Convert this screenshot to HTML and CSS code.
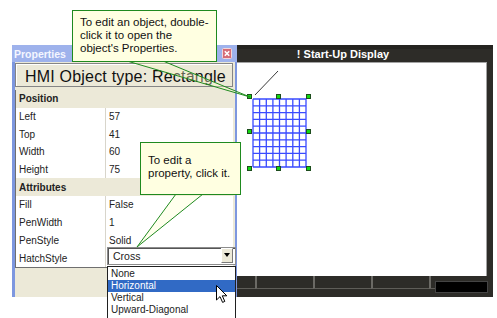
FILE: index.html
```html
<!DOCTYPE html>
<html lang="en">
<head>
    <meta charset="UTF-8">
    <meta name="viewport" content="width=device-width, initial-scale=1.0">
    <link rel="stylesheet" href="styles.css">
    <title>HMI Properties</title>
</head>
<body>
    <div class="desk">
        <!-- display window behind the properties panel -->
        <div class="display">
            <div class="display-title">! Start-Up Display</div>
            <div class="canvas">
                <svg class="canvas-art" width="288" height="214" viewBox="0 0 288 214">
                    <line x1="79" y1="9" x2="56" y2="33" stroke="#3a3a3a" stroke-width="1"/>
                    <path d="M54 37V105M60.6 37V105M67.3 37V105M73.9 37V105M80.5 37V105M87.1 37V105M93.8 37V105M100.4 37V105M107 37V105M54 37H107M54 43.8H107M54 50.6H107M54 57.4H107M54 64.2H107M54 71H107M54 77.8H107M54 84.6H107M54 91.4H107M54 98.2H107M54 105H107" stroke="#3a4bff" stroke-width="1.3" fill="none"/>
                    <g fill="#12d812" stroke="#1d4d1d" stroke-width="1">
                        <rect x="48.5" y="32.5" width="4" height="4"/>
                        <rect x="77.5" y="32.5" width="4" height="4"/>
                        <rect x="107.5" y="32.5" width="4" height="4"/>
                        <rect x="48.5" y="67.5" width="4" height="4"/>
                        <rect x="107.5" y="67.5" width="4" height="4"/>
                        <rect x="48.5" y="104.5" width="4" height="4"/>
                        <rect x="77.5" y="104.5" width="4" height="4"/>
                        <rect x="107.5" y="104.5" width="4" height="4"/>
                    </g>
                </svg>
            </div>
            <div class="status">
                <span class="cell"></span>
                <span class="cell"></span>
                <span class="cell"></span>
                <span class="cell"></span>
                <span class="cell gap"></span>
                <span class="led"></span>
            </div>
        </div>

        <!-- properties panel -->
        <div class="props">
            <div class="props-title">
                <span>Properties</span>
                <svg class="close" width="10" height="11" viewBox="0 0 10 11">
                    <rect x="0.5" y="0.5" width="9" height="10" rx="1" fill="#d66c76" stroke="#f2d6da"/>
                    <path d="M2.8 3.2L7.2 7.8M7.2 3.2L2.8 7.8" stroke="#fff" stroke-width="1.6"/>
                </svg>
            </div>
            <div class="props-body">
                <div class="obj-type">HMI Object type: Rectangle</div>
                <div class="grid">
                    <div class="row section">Position</div>
                    <div class="row"><span class="key">Left</span><span class="val">57</span></div>
                    <div class="row"><span class="key">Top</span><span class="val">41</span></div>
                    <div class="row"><span class="key">Width</span><span class="val">60</span></div>
                    <div class="row"><span class="key">Height</span><span class="val">75</span></div>
                    <div class="row section">Attributes</div>
                    <div class="row"><span class="key">Fill</span><span class="val">False</span></div>
                    <div class="row"><span class="key">PenWidth</span><span class="val">1</span></div>
                    <div class="row"><span class="key">PenStyle</span><span class="val">Solid</span></div>
                    <div class="row"><span class="key">HatchStyle</span><span class="val"></span>
                        <div class="combo">
                            <span class="combo-text">Cross</span>
                            <span class="combo-btn"><span class="arrow"></span></span>
                            <ul class="combo-list">
                                <li class="opt">None</li>
                                <li class="opt active">Horizontal</li>
                                <li class="opt">Vertical</li>
                                <li class="opt">Upward-Diagonal</li>
                            </ul>
                        </div>
                    </div>
                </div>
            </div>
        </div>

        <!-- callout pointers -->
        <svg class="pointers" width="497" height="318" viewBox="0 0 497 318">
            <polyline points="127,61 250,97 163,61" fill="#ffffcc" fill-opacity="0.35" stroke="#1f8a1f" stroke-width="1"/>
            <polyline points="176,194 137,247 203,194" fill="#ffffcc" fill-opacity="0.35" stroke="#1f8a1f" stroke-width="1"/>
        </svg>

        <div class="callout callout-object">To edit an object, double-<br>click it to open the<br>object's Properties.</div>
        <div class="callout callout-prop">To edit a<br>property, click it.</div>

        <svg class="cursor" width="13" height="19" viewBox="0 0 13 19">
            <path d="M0.5 0.5L0.5 15L4 11.6L6.6 17.4L8.8 16.4L6.3 10.8L10.8 10.8Z" fill="#fff" stroke="#000" stroke-width="1" stroke-linejoin="round"/>
        </svg>
    </div>
</body>
</html>
```

FILE: styles.css
```css
body {
    margin: 0;
    background-color: #fff;
    font-family: "Liberation Sans", Arial, sans-serif;
    overflow: hidden;
}

.desk {
    position: relative;
    width: 497px;
    height: 318px;
    overflow: hidden;
}

/* display window */
.display {
    position: absolute;
    left: 193px;
    top: 45px;
    width: 300px;
    height: 252px;
    background-color: #2d2c28;
    display: flex;
    flex-direction: column;
    z-index: 1;
}

.display-title {
    height: 17px;
    line-height: 18px;
    font-size: 11px;
    font-weight: bold;
    color: #fff;
    text-align: center;
    box-shadow: inset 0 4px #252420;
}

.canvas {
    height: 214px;
    margin: 0 6px;
    background-color: #fff;
    box-shadow: inset -1px 1px #a3a3a3;
}

.canvas-art {
    display: block;
}

.status {
    flex: 1;
    display: flex;
    align-items: flex-start;
    padding-left: 6px;
}

.cell {
    width: 56px;
    height: 12px;
    border-bottom: 1px solid #5e5d58;
}

.cell + .cell {
    border-left: 2px solid #6b6a65;
}

.cell.gap {
    width: 4px;
}

.led {
    width: 53px;
    height: 12px;
    margin-top: 5px;
    background-color: #000;
    border: 1px solid #444;
    box-sizing: border-box;
}

/* properties panel */
.props {
    position: absolute;
    left: 12px;
    top: 45px;
    width: 225px;
    height: 252px;
    display: flex;
    flex-direction: column;
    z-index: 2;
}

.props-title {
    height: 17px;
    background-color: #9eb2ec;
    display: flex;
    align-items: center;
    justify-content: space-between;
    padding: 0 5px 0 2px;
    color: #f4f6ff;
    font-size: 10.5px;
    font-weight: bold;
}

.close {
    display: block;
}

.props-body {
    flex: 1;
    background-color: #ece9d8;
    border-left: 3px solid #7d97df;
    border-right: 2px solid #7d97df;
    padding: 1px 2px 0 0;
    display: flex;
    flex-direction: column;
}

.obj-type {
    height: 24px;
    box-sizing: border-box;
    border: 1px solid #858585;
    box-shadow: inset 1px 1px #fff;
    padding: 3px 0 0 9px;
    line-height: 19px;
    font-size: 16px;
    letter-spacing: 0.2px;
    white-space: nowrap;
    overflow: hidden;
    color: #111;
}

.grid {
    margin-top: 3px;
    background-color: #fff;
    border-left: 1px solid #6f6f6f;
    border-bottom: 1px solid #6f6f6f;
    font-size: 10px;
    color: #222;
}

.row {
    height: 17.7px;
    display: flex;
    position: relative;
}

.row.section {
    background-color: #ece9d8;
    font-weight: bold;
    align-items: center;
    padding-left: 3px;
}

.key {
    width: 90px;
    box-sizing: border-box;
    border-right: 1px solid #d8d5cb;
    padding-left: 3px;
    display: flex;
    align-items: center;
}

.val {
    padding-left: 3px;
    display: flex;
    align-items: center;
}

/* dropdown editor over the HatchStyle cell */
.combo {
    position: absolute;
    left: 91px;
    top: -2.3px;
    width: 129px;
    height: 18px;
    box-sizing: border-box;
    border: 1px solid #8c8c8c;
    box-shadow: inset 1px 1px #555;
    background-color: #fff;
}

.combo-text {
    display: block;
    padding-left: 5px;
    line-height: 16px;
    font-size: 10.5px;
}

.combo-btn {
    position: absolute;
    right: 2px;
    top: 0;
    width: 12px;
    height: 15px;
    box-sizing: border-box;
    background-color: #ece9d8;
    border: 1px solid;
    border-color: #fff #7a7a7a #7a7a7a #fff;
    display: flex;
    align-items: center;
    justify-content: center;
}

.arrow {
    width: 0;
    height: 0;
    border-left: 3.5px solid transparent;
    border-right: 3.5px solid transparent;
    border-top: 4px solid #000;
}

.combo-list {
    position: absolute;
    left: -1px;
    top: 18px;
    width: 129px;
    height: 60px;
    box-sizing: border-box;
    margin: 0;
    padding: 1px 0 0;
    list-style: none;
    background-color: #fff;
    border: 1px solid #202020;
    font-size: 10px;
}

.opt {
    height: 12px;
    line-height: 12px;
    padding-left: 3px;
}

.opt.active {
    background-color: #316ac5;
    color: #fff;
}

/* callouts */
.pointers {
    position: absolute;
    left: 0;
    top: 0;
    z-index: 4;
    pointer-events: none;
}

.callout {
    position: absolute;
    box-sizing: border-box;
    background-color: #ffffe1;
    border: 1px solid #1f8a1f;
    padding-left: 7px;
    font-size: 11.5px;
    line-height: 13px;
    color: #111;
    white-space: nowrap;
    z-index: 5;
}

.callout-object {
    left: 72px;
    top: 10px;
    width: 145px;
    height: 52px;
    padding-top: 5px;
}

.callout-prop {
    left: 140px;
    top: 142px;
    width: 101px;
    height: 53px;
    padding-top: 11px;
}

.cursor {
    position: absolute;
    left: 216px;
    top: 285px;
    z-index: 6;
}
```
